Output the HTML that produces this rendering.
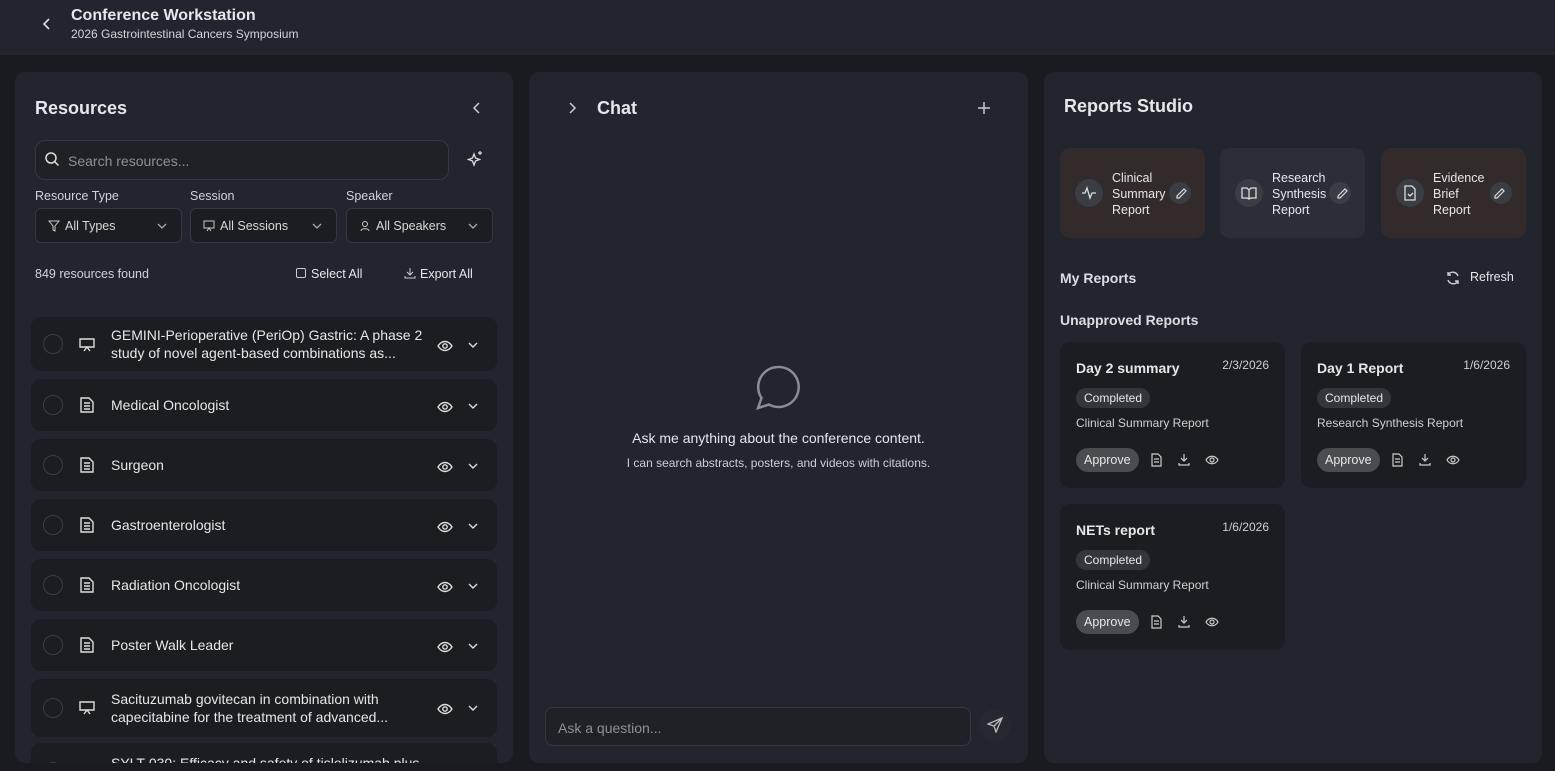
<!DOCTYPE html>
<html><head><meta charset="utf-8"><style>
*{box-sizing:border-box;margin:0;padding:0}
body{width:1555px;height:771px;overflow:hidden;background:#191b20;font-family:"Liberation Sans",sans-serif;color:#e6e7ea;position:relative}
.abs{position:absolute}
.hdr{left:0;top:0;width:1555px;height:55px;background:#22252d}
.panel{background:#22252d;border-radius:10px;top:72px;height:691px;overflow:hidden}
svg{display:block}
.row{position:absolute;left:16px;width:466px;background:#1b1d22;border-radius:10px}
.row .c{position:absolute;left:12px;width:20px;height:20px;border:1.5px solid #3a3d45;border-radius:50%}
.row .t{position:absolute;left:80px;font-size:14px;line-height:18px;color:#e6e7ea;width:320px}
.sel{position:absolute;top:136px;height:35px;border:1px solid #353840;border-radius:6px;background:#1b1d22;font-size:12.5px;color:#d8d9dc}
.lbl{position:absolute;top:117px;font-size:12.5px;color:#d0d2d6}
.tpl{position:absolute;top:76px;width:145px;height:90px;border-radius:10px}
.tpl .n{position:absolute;left:52px;top:22px;font-size:12.5px;line-height:16px;color:#e6e7ea}
.ci{position:absolute;left:15px;top:31px;width:28px;height:28px;border-radius:50%;background:#3a3d44}
.pen{position:absolute;left:109px;top:34px;width:22px;height:22px;border-radius:50%;background:#3a3d44}
.card{position:absolute;width:225px;height:146px;background:#1b1d22;border-radius:10px}
.card .h{position:absolute;left:16px;top:18px;font-size:14px;font-weight:bold}
.card .d{position:absolute;right:16px;top:16px;font-size:12px;color:#cfd0d4}
.card .b{position:absolute;left:16px;top:46px;height:20px;padding:0 8px;border-radius:10px;background:#34363d;font-size:12px;line-height:20px}
.card .s{position:absolute;left:16px;top:74px;font-size:12px;color:#cfd0d4}
.card .a{position:absolute;left:16px;top:106px;height:24px;padding:0 8px;border-radius:12px;background:#4a4c52;font-size:12.5px;line-height:24px}
.card .ic{position:absolute;top:111px}
</style></head><body>
<div class="abs hdr">
<svg class="abs" style="left:41px;top:17px" width="12" height="14" viewBox="0 0 12 14"><path d="M8 2L3 7l5 5" stroke="#ddd" stroke-width="1.6" fill="none"/></svg>
<div class="abs" style="left:71px;top:7px;font-size:16px;font-weight:bold">Conference Workstation</div>
<div class="abs" style="left:71px;top:27px;font-size:12px;color:#d4d5d9">2026 Gastrointestinal Cancers Symposium</div>
</div>

<div class="abs panel" style="left:15px;width:498px">
<div class="abs" style="left:20px;top:26px;font-size:18px;font-weight:bold">Resources</div>
<svg class="abs" style="left:456px;top:29px" width="12" height="14"><path d="M8 2L3 7l5 5" stroke="#ccc" stroke-width="1.5" fill="none"/></svg>
<div class="abs" style="left:20px;top:68px;width:414px;height:40px;border:1px solid #353840;border-radius:10px;background:#1f2127"></div>
<svg class="abs" style="left:29px;top:79px" width="16" height="16"><circle cx="7" cy="7" r="5" stroke="#ddd" stroke-width="1.5" fill="none"/><path d="M11 11l3.5 3.5" stroke="#ddd" stroke-width="1.5"/></svg>
<div class="abs" style="left:53px;top:81px;font-size:14px;color:#8d9097">Search resources...</div>
<svg class="abs" style="left:451px;top:78px" width="18" height="18"><path d="M8 4l1.5 4 4 1.5-4 1.5L8 15l-1.5-4L2.5 9.5l4-1.5z" stroke="#ddd" stroke-width="1.3" fill="none"/><path d="M14 1v4M12 3h4" stroke="#ddd" stroke-width="1.2"/></svg>
<div class="lbl" style="left:20px">Resource Type</div><div class="lbl" style="left:175px">Session</div><div class="lbl" style="left:331px">Speaker</div>
<div class="sel" style="left:20px;width:147px"><span class="abs" style="left:29px;top:10px">All Types</span><svg class="abs" style="left:12px;top:11px" width="12" height="12"><path d="M1 1h10L7 6v5L5 10V6z" stroke="#ccc" fill="none"/></svg><svg class="abs" style="left:120px;top:12px" width="12" height="10"><path d="M2 3l4 4 4-4" stroke="#aaa" fill="none" stroke-width="1.3"/></svg></div>
<div class="sel" style="left:175px;width:147px"><span class="abs" style="left:29px;top:10px">All Sessions</span><svg class="abs" style="left:12px;top:11px" width="12" height="12"><path d="M1 1h10v7H1zM4 11l2-3 2 3" stroke="#ccc" fill="none"/></svg><svg class="abs" style="left:120px;top:12px" width="12" height="10"><path d="M2 3l4 4 4-4" stroke="#aaa" fill="none" stroke-width="1.3"/></svg></div>
<div class="sel" style="left:331px;width:147px"><span class="abs" style="left:29px;top:10px">All Speakers</span><svg class="abs" style="left:12px;top:11px" width="12" height="12"><circle cx="6" cy="4" r="2.5" stroke="#ccc" fill="none"/><path d="M2 11c0-3 8-3 8 0" stroke="#ccc" fill="none"/></svg><svg class="abs" style="left:120px;top:12px" width="12" height="10"><path d="M2 3l4 4 4-4" stroke="#aaa" fill="none" stroke-width="1.3"/></svg></div>
<div class="abs" style="left:20px;top:195px;font-size:12.5px;color:#d0d2d6">849 resources found</div>
<div class="abs" style="left:281px;top:196px;width:10px;height:10px;border:1.2px solid #ccc;border-radius:2px"></div>
<div class="abs" style="left:296px;top:195px;font-size:12.5px">Select All</div>
<svg class="abs" style="left:389px;top:195px" width="12" height="12"><path d="M6 1v7M3 5l3 3 3-3M1 9v2h10V9" stroke="#ccc" fill="none"/></svg>
<div class="abs" style="left:405px;top:195px;font-size:12.5px">Export All</div>

<div class="row" style="top:245px;height:54px"><div class="c" style="top:17px"></div><div class="t" style="top:9px">GEMINI-Perioperative (PeriOp) Gastric: A phase 2 study of novel agent-based combinations as...</div></div>
<div class="row" style="top:307px;height:52px"><div class="c" style="top:16px"></div><div class="t" style="top:17px">Medical Oncologist</div></div>
<div class="row" style="top:367px;height:52px"><div class="c" style="top:16px"></div><div class="t" style="top:17px">Surgeon</div></div>
<div class="row" style="top:427px;height:52px"><div class="c" style="top:16px"></div><div class="t" style="top:17px">Gastroenterologist</div></div>
<div class="row" style="top:487px;height:52px"><div class="c" style="top:16px"></div><div class="t" style="top:17px">Radiation Oncologist</div></div>
<div class="row" style="top:547px;height:52px"><div class="c" style="top:16px"></div><div class="t" style="top:17px">Poster Walk Leader</div></div>
<div class="row" style="top:607px;height:58px"><div class="c" style="top:19px"></div><div class="t" style="top:11px">Sacituzumab govitecan in combination with capecitabine for the treatment of advanced...</div></div>
<div class="row" style="top:671px;height:58px"><div class="c" style="top:19px"></div><div class="t" style="top:11px">SYLT-030: Efficacy and safety of tislelizumab plus</div></div>
</div>

<!-- row icons (absolute to page) -->
<svg class="abs" style="left:78px;top:336px" width="480" height="400">
<g stroke="#ddd" fill="none" stroke-width="1.4">
<path d="M2 3h14v8H2zM6 15l3-4 3 4"/>
<path d="M3 62h8l4 4v10H3zM6 67h6M6 70h6M6 73h6"/>
<path d="M3 122h8l4 4v10H3zM6 127h6M6 130h6M6 133h6"/>
<path d="M3 182h8l4 4v10H3zM6 187h6M6 190h6M6 193h6"/>
<path d="M3 242h8l4 4v10H3zM6 247h6M6 250h6M6 253h6"/>
<path d="M3 302h8l4 4v10H3zM6 307h6M6 310h6M6 313h6"/>
<path d="M2 366h14v8H2zM6 378l3-4 3 4"/>
</g>
<g stroke="#ddd" fill="none" stroke-width="1.4">
<g id="e"><path d="M360 10c4-6 10-6 14 0-4 6-10 6-14 0z"/><circle cx="367" cy="10" r="2.2"/><path d="M391 7l4 4 4-4"/></g>
<use href="#e" y="61"/><use href="#e" y="121"/><use href="#e" y="181"/><use href="#e" y="241"/><use href="#e" y="301"/><use href="#e" y="363"/>
</g></svg>

<div class="abs panel" style="left:529px;width:499px">
<svg class="abs" style="left:37px;top:29px" width="12" height="14"><path d="M4 2l5 5-5 5" stroke="#ccc" stroke-width="1.5" fill="none"/></svg>
<div class="abs" style="left:68px;top:26px;font-size:18px;font-weight:bold">Chat</div>
<svg class="abs" style="left:448px;top:29px" width="14" height="14"><path d="M7 1v12M1 7h12" stroke="#ccc" stroke-width="1.5"/></svg>
<svg class="abs" style="left:225px;top:292px" width="48" height="48"><path d="M24 3a20 20 0 1 1-9 37.5L4 44l3.5-10A20 20 0 0 1 24 3z" stroke="#8a8d94" stroke-width="2.5" fill="none"/></svg>
<div class="abs" style="left:0;width:499px;text-align:center;top:358px;font-size:14px">Ask me anything about the conference content.</div>
<div class="abs" style="left:0;width:499px;text-align:center;top:384px;font-size:12px;color:#cfd0d4">I can search abstracts, posters, and videos with citations.</div>
<div class="abs" style="left:16px;top:635px;width:426px;height:39px;border:1px solid #353840;border-radius:8px;background:#1f2127"></div>
<div class="abs" style="left:29px;top:648px;font-size:14px;color:#8d9097">Ask a question...</div>
<div class="abs" style="left:450px;top:637px;width:32px;height:32px;border-radius:50%;background:#26282f"></div>
<svg class="abs" style="left:458px;top:645px" width="16" height="16"><path d="M15 1L1 7l6 2 2 6z M15 1L7 9" stroke="#bbb" stroke-width="1.3" fill="none"/></svg>
</div>

<div class="abs panel" style="left:1044px;width:498px">
<div class="abs" style="left:20px;top:24px;font-size:18px;font-weight:bold">Reports Studio</div>
<div class="tpl" style="left:16px;background:#322a2b"><div class="ci"></div><svg class="abs" style="left:21px;top:37px" width="16" height="16"><path d="M1 8h3l2-5 3 10 2-5h4" stroke="#ddd" fill="none" stroke-width="1.3"/></svg><div class="n">Clinical<br>Summary<br>Report</div><div class="pen"></div></div>
<div class="tpl" style="left:176px;background:#2d2d37"><div class="ci"></div><svg class="abs" style="left:21px;top:37px" width="16" height="16"><path d="M1 3h5l2 2 2-2h5v10h-5l-2 1-2-1H1zM8 5v9" stroke="#ddd" fill="none" stroke-width="1.3"/></svg><div class="n">Research<br>Synthesis<br>Report</div><div class="pen"></div></div>
<div class="tpl" style="left:337px;background:#322a2b"><div class="ci"></div><svg class="abs" style="left:21px;top:37px" width="16" height="16"><path d="M3 1h7l3 3v11H3zM6 9l2 2 3-3" stroke="#ddd" fill="none" stroke-width="1.3"/></svg><div class="n">Evidence<br>Brief<br>Report</div><div class="pen"></div></div>
<svg class="abs" style="left:129px;top:113px" width="400" height="16"><g stroke="#ddd" fill="none" stroke-width="1.2"><path d="M4 11l7-7 2 2-7 7H4z"/><path d="M165 11l7-7 2 2-7 7h-2z"/><path d="M322 11l7-7 2 2-7 7h-2z"/></g></svg>
<div class="abs" style="left:16px;top:198px;font-size:14px;font-weight:bold;color:#dcdde0">My Reports</div>
<svg class="abs" style="left:401px;top:198px" width="16" height="16"><path d="M13 6A5.5 5.5 0 0 0 3 5M3 2v3h3M3 10a5.5 5.5 0 0 0 10 1M13 14v-3h-3" stroke="#ccc" fill="none" stroke-width="1.4"/></svg>
<div class="abs" style="left:426px;top:198px;font-size:12.5px">Refresh</div>
<div class="abs" style="left:16px;top:240px;font-size:14px;font-weight:bold;color:#dcdde0">Unapproved Reports</div>
<div class="card" style="left:16px;top:270px"><div class="h">Day 2 summary</div><div class="d">2/3/2026</div><div class="b">Completed</div><div class="s">Clinical Summary Report</div><div class="a">Approve</div>
<svg class="ic" style="left:90px" width="80" height="14"><g stroke="#ccc" fill="none" stroke-width="1.2"><path d="M2 1h6l3 3v9H2zM4 6h5M4 9h5"/><path d="M34 1v7M31 5l3 3 3-3M29 10v2h10v-2"/><path d="M56 7c3-5 9-5 12 0-3 5-9 5-12 0z"/><circle cx="62" cy="7" r="2"/></g></svg></div>
<div class="card" style="left:257px;top:270px"><div class="h">Day 1 Report</div><div class="d">1/6/2026</div><div class="b">Completed</div><div class="s">Research Synthesis Report</div><div class="a">Approve</div>
<svg class="ic" style="left:90px" width="80" height="14"><g stroke="#ccc" fill="none" stroke-width="1.2"><path d="M2 1h6l3 3v9H2zM4 6h5M4 9h5"/><path d="M34 1v7M31 5l3 3 3-3M29 10v2h10v-2"/><path d="M56 7c3-5 9-5 12 0-3 5-9 5-12 0z"/><circle cx="62" cy="7" r="2"/></g></svg></div>
<div class="card" style="left:16px;top:432px"><div class="h">NETs report</div><div class="d">1/6/2026</div><div class="b">Completed</div><div class="s">Clinical Summary Report</div><div class="a">Approve</div>
<svg class="ic" style="left:90px" width="80" height="14"><g stroke="#ccc" fill="none" stroke-width="1.2"><path d="M2 1h6l3 3v9H2zM4 6h5M4 9h5"/><path d="M34 1v7M31 5l3 3 3-3M29 10v2h10v-2"/><path d="M56 7c3-5 9-5 12 0-3 5-9 5-12 0z"/><circle cx="62" cy="7" r="2"/></g></svg></div>
</div>
</body></html>
